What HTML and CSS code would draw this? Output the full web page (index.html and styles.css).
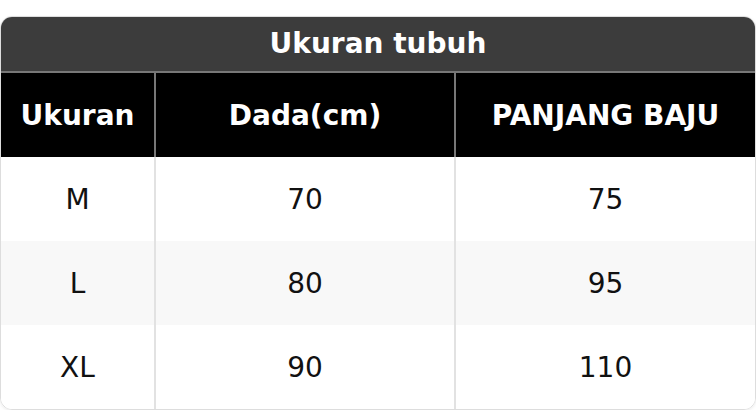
FILE: index.html
```html
<!DOCTYPE html>
<html>
<head>
<meta charset="utf-8">
<link rel="stylesheet" href="styles.css">
</head>
<body>
<div class="card">
  <div class="title">Ukuran tubuh</div>
  <div class="grid">
    <div class="cell head">Ukuran</div>
    <div class="cell head">Dada(cm)</div>
    <div class="cell head">PANJANG BAJU</div>
    <div class="cell">M</div>
    <div class="cell">70</div>
    <div class="cell">75</div>
    <div class="cell alt">L</div>
    <div class="cell alt">80</div>
    <div class="cell alt">95</div>
    <div class="cell">XL</div>
    <div class="cell">90</div>
    <div class="cell">110</div>
  </div>
</div>
</body>
</html>
```
FILE: styles.css
```css
html, body {
  margin: 0;
  padding: 0;
  background: #ffffff;
}
body {
  padding-top: 16px;
  font-family: "DejaVu Sans", Verdana, sans-serif;
}
.card {
  width: 756px;
  box-sizing: border-box;
  border: 1px solid #dddddd;
  border-radius: 12px;
  overflow: hidden;
  box-shadow: 0 1px 3px rgba(0,0,0,0.08);
}
.title {
  background: #3c3c3c;
  color: #ffffff;
  font-weight: bold;
  font-size: 28px;
  height: 56px;
  padding-bottom: 2px;
  box-sizing: border-box;
  display: flex;
  align-items: center;
  justify-content: center;
  border-bottom: 2px solid #777777;
}
.grid {
  display: grid;
  grid-template-columns: 153px 300px 1fr;
}
.cell {
  height: 84px;
  display: flex;
  align-items: center;
  justify-content: center;
  font-size: 28px;
  color: #111111;
  border-left: 2px solid #e2e2e2;
  background: #ffffff;
}
.cell:nth-child(3n+1) {
  border-left: none;
}
.cell.alt {
  background: #f8f8f8;
}
.cell.head {
  background: #000000;
  color: #ffffff;
  font-weight: bold;
  border-left-color: #777777;
}
```
